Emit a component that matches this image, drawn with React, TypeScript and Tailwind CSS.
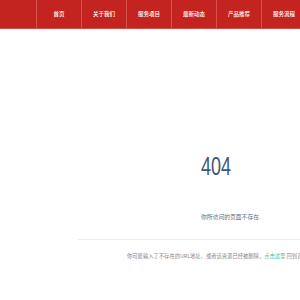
export default function App() {
  const nav = ["首页", "关于我们", "服务项目", "最新动态", "产品推荐", "服务流程"];
  const cjk = { fontFamily: '"Noto Sans CJK SC", "Noto Sans", sans-serif' };
  return (
    <div className="w-[300px] h-[300px] overflow-hidden bg-white" style={cjk}>
      <div className="h-[29px] bg-[#c4241f] border-b border-[#d44a45] flex pl-[36px] overflow-hidden">
        {nav.map((n) => (
          <div
            key={n}
            className="w-[45px] shrink-0 border-l border-[#d9514c] flex items-center justify-center text-white text-[5.5px] font-medium"
          >
            {n}
          </div>
        ))}
      </div>
      <div className="pl-[201px] pt-[125px]">
        <div
          className="text-[25px] leading-none text-[#3d5877] origin-left scale-x-[0.72]"
          style={{ fontFamily: '"Liberation Sans", Arial, sans-serif' }}
        >
          404
        </div>
        <div className="mt-[35px] text-[5.8px] leading-none text-[#5c7189]">你所访问的页面不存在.</div>
      </div>
      <div className="ml-[78px] mt-[19px] h-px bg-[#eeeeee]" />
      <div className="pl-[127px] mt-[14px] whitespace-nowrap text-[5.3px] leading-none text-[#888888]">
        你可能输入了不存在的URL地址，或者该资源已经被删除，<span className="text-[#3cbf9a]">点击这里</span> 回到首页
      </div>
    </div>
  );
}
